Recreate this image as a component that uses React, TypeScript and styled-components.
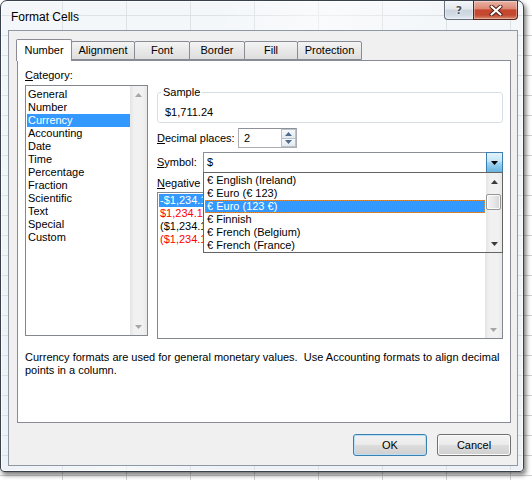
import React from "react";
import styled, { createGlobalStyle } from "styled-components";

const Global = createGlobalStyle`
  html, body { margin: 0; padding: 0; }
  body {
    width: 532px; height: 480px; overflow: hidden;
    font-family: "Liberation Sans", Arial, sans-serif;
    font-size: 11px; color: #000;
  }
`;

const Desktop = styled.div`
  width: 532px;
  height: 480px;
  box-sizing: border-box;
  background-color: #fff;
  background-image:
    linear-gradient(to right, #d0d0d0 1px, transparent 1px),
    linear-gradient(to bottom, #d0d0d0 1px, transparent 1px);
  background-size: 64px 20px;
  background-position: 62px 15px;
`;

const Window = styled.div`
  width: 524px;
  height: 472px;
  box-sizing: border-box;
  border: 1px solid #39424c;
  border-radius: 7px 7px 4px 4px;
  background:
    linear-gradient(115deg, rgba(255,255,255,0) 30%, rgba(255,255,255,0.45) 45%, rgba(255,255,255,0) 60%),
    linear-gradient(rgba(236, 241, 246, 0.55), rgba(226, 233, 240, 0.6));
  box-shadow: 2px 3px 5px rgba(0, 0, 0, 0.55), inset 0 0 0 1px rgba(255,255,255,0.7);
  display: flex;
  flex-direction: column;
  padding: 0 5px 5px 7px;
`;

const TitleBar = styled.div`
  height: 29px;
  display: flex;
  align-items: flex-start;
  justify-content: space-between;
`;

const Title = styled.div`
  font-size: 12px;
  line-height: 15px;
  margin: 9px 0 0 3px;
  color: #000;
  text-shadow: 0 0 6px rgba(255,255,255,0.9);
`;

const CaptionButtons = styled.div`
  display: flex;
`;

const CaptionBtn = styled.div<{ $variant: "help" | "close" }>`
  box-sizing: border-box;
  height: 19px;
  width: ${(p) => (p.$variant === "close" ? 45 : 29)}px;
  display: flex;
  align-items: center;
  justify-content: center;
  border: 1px solid ${(p) => (p.$variant === "close" ? "#5a2218" : "#67727e")};
  border-top: none;
  ${(p) => (p.$variant === "help" ? "border-right: none;" : "")}
  border-radius: ${(p) => (p.$variant === "close" ? "0 0 4px 0" : "0 0 0 4px")};
  background: ${(p) =>
    p.$variant === "close"
      ? "linear-gradient(#eab3a6 0%, #dc8a76 42%, #c8462f 50%, #c24a30 78%, #d98a6c 100%)"
      : "linear-gradient(#f3f6f9 0%, #e2e8ee 45%, #cbd4dd 50%, #d3dce5 80%, #e6edf3 100%)"};
  box-shadow: inset 0 0 0 1px rgba(255,255,255,0.35);
`;

const HelpGlyph = styled.span`
  font-family: "DejaVu Sans", sans-serif;
  font-weight: bold;
  font-size: 11px;
  color: #4a5562;
  text-shadow: 0 0 2px #fff, 0 0 2px #fff;
  line-height: 1;
`;

const Client = styled.div`
  flex: 1;
  box-sizing: border-box;
  background: #f0f0f0;
  border: 1px solid #8f99a4;
  padding: 8px 6px 0 8px;
  display: flex;
  flex-direction: column;
`;

const TabStrip = styled.div`
  display: flex;
  align-items: flex-end;
  height: 22px;
  margin-left: -1px;
  position: relative;
  z-index: 1;
`;

const Tab = styled.div<{ $active?: boolean; $w: number }>`
  box-sizing: border-box;
  width: ${(p) => p.$w}px;
  height: ${(p) => (p.$active ? 22 : 19)}px;
  margin-bottom: ${(p) => (p.$active ? 0 : 1)}px;
  margin-left: -1px;
  &:first-child { margin-left: 0; }
  border: 1px solid #898c95;
  ${(p) => (p.$active ? "border-bottom: none;" : "")}
  border-radius: 2px 2px 0 0;
  background: ${(p) => (p.$active ? "#fff" : "linear-gradient(#f4f4f4, #e9e9e9 45%, #dedede)")};
  position: relative;
  z-index: ${(p) => (p.$active ? 2 : 1)};
  display: flex;
  align-items: ${(p) => (p.$active ? "flex-start" : "center")};
  justify-content: center;
  padding-top: ${(p) => (p.$active ? 4 : 0)}px;
  line-height: 13px;
`;

const Panel = styled.div`
  box-sizing: border-box;
  height: 363px;
  margin-top: -1px;
  border: 1px solid #898c95;
  background: #fff;
  padding: 8px 7px 0 7px;
  display: flex;
  flex-direction: column;
`;

const Columns = styled.div`
  display: grid;
  grid-template-columns: 123px 346px;
  column-gap: 9px;
  align-items: start;
`;

const Column = styled.div`
  display: flex;
  flex-direction: column;
  position: relative;
`;

const Label = styled.div<{ $w?: number }>`
  line-height: 13px;
  white-space: nowrap;
  ${(p) => (p.$w ? `width: ${p.$w}px; flex: none;` : "")}
`;

const ListBox = styled.div<{ $h: number; $mt: number }>`
  box-sizing: border-box;
  height: ${(p) => p.$h}px;
  margin-top: ${(p) => p.$mt}px;
  border: 1px solid #828790;
  background: #fff;
  display: flex;
`;

const ListItems = styled.div<{ $pt: number }>`
  flex: 1;
  min-width: 0;
  padding: ${(p) => p.$pt}px 0 0 1px;
  overflow: hidden;
`;

const ListItem = styled.div<{ $sel?: boolean; $color?: string }>`
  height: 13px;
  line-height: 13px;
  padding-left: 1px;
  white-space: nowrap;
  background: ${(p) => (p.$sel ? "#3399ff" : "transparent")};
  color: ${(p) => (p.$sel ? "#fff" : p.$color || "#000")};
`;

const ScrollTrack = styled.div<{ $w?: number }>`
  width: ${(p) => p.$w || 17}px;
  flex: none;
  display: flex;
  flex-direction: column;
  background: linear-gradient(to right, #e4e4e4, #f1f1f1 25%, #f1f1f1 75%, #e8e8e8);
`;

const ArrowBtn = styled.div`
  height: 17px;
  flex: none;
  display: flex;
  align-items: center;
  justify-content: center;
`;

const Spacer = styled.div`
  flex: 1;
`;

const Thumb = styled.div`
  box-sizing: border-box;
  margin: 4px 1px 0 0;
  height: 16px;
  border: 1px solid #979797;
  border-radius: 2px;
  background: linear-gradient(to right, #f4f4f4, #e8e8e8 50%, #d5d5d5);
  box-shadow: inset 0 0 0 1px rgba(255,255,255,0.8);
`;

const Arrow = ({ up, color }: { up?: boolean; color: string }) => (
  <svg width="7" height="4" viewBox="0 0 7 4">
    <path d={up ? "M0 4 L3.5 0 L7 4 Z" : "M0 0 L7 0 L3.5 4 Z"} fill={color} />
  </svg>
);

const GroupBox = styled.div`
  box-sizing: border-box;
  margin-top: 23px;
  height: 31px;
  border: 1px solid #d5dfe5;
  border-radius: 3px;
  display: flex;
  flex-direction: column;
`;

const Legend = styled.div`
  margin: -7px 0 0 3px;
  padding: 0 2px;
  background: #fff;
  line-height: 13px;
  width: fit-content;
`;

const SampleValue = styled.div`
  margin: 7px 0 0 7px;
  line-height: 13px;
`;

const FieldRow = styled.div<{ $mt: number; $h: number }>`
  display: flex;
  align-items: center;
  height: ${(p) => p.$h}px;
  margin-top: ${(p) => p.$mt}px;
  position: relative;
`;

const SpinBox = styled.div`
  box-sizing: border-box;
  width: 59px;
  height: 20px;
  border: 1px solid #abadb3;
  border-top-color: #8e9198;
  background: #fff;
  display: flex;
`;

const SpinText = styled.div`
  flex: 1;
  padding-left: 5px;
  line-height: 18px;
`;

const SpinButtons = styled.div`
  width: 15px;
  display: flex;
  flex-direction: column;
`;

const SpinPart = styled.div`
  flex: 1;
  box-sizing: border-box;
  border: 1px solid #b6c3cf;
  margin: 0 0 0 0;
  background: linear-gradient(#f7f9fb, #e4e9ee);
  display: flex;
  align-items: center;
  justify-content: center;
  & + & { border-top: none; }
`;

const ComboWrap = styled.div`
  position: relative;
  flex: 1;
  height: 21px;
`;

const Combo = styled.div`
  box-sizing: border-box;
  height: 21px;
  border: 1px solid #8b8f97;
  background: #fff;
  display: flex;
`;

const ComboText = styled.div`
  flex: 1;
  padding-left: 3px;
  line-height: 19px;
`;

const ComboButton = styled.div`
  box-sizing: border-box;
  width: 17px;
  border: 1px solid #3c7fb1;
  background: linear-gradient(#e3f3fc 0%, #c4e5f7 45%, #a3d6f3 50%, #68b3df 100%);
  display: flex;
  align-items: center;
  justify-content: center;
  margin: -1px -1px -1px 0;
`;

const DropList = styled.div`
  position: absolute;
  left: 0;
  right: 0;
  top: 20px;
  height: 81px;
  box-sizing: border-box;
  border: 1px solid #646464;
  background: #fff;
  display: flex;
  z-index: 5;
`;

const DropItems = styled.div`
  flex: 1;
  padding: 1px 1px 0 1px;
`;

const DropItem = styled.div<{ $sel?: boolean }>`
  box-sizing: border-box;
  height: 13px;
  line-height: 11px;
  padding-left: 1px;
  white-space: nowrap;
  border: 1px ${(p) => (p.$sel ? "dotted #e08a3c" : "solid transparent")};
  background: ${(p) => (p.$sel ? "#3399ff" : "transparent")};
  color: ${(p) => (p.$sel ? "#fff" : "#000")};
`;

const Description = styled.div`
  margin-top: 12px;
  line-height: 13px;
`;

const ButtonRow = styled.div`
  display: flex;
  justify-content: flex-end;
  gap: 10px;
  margin-top: 11px;
`;

const Button = styled.div<{ $default?: boolean }>`
  box-sizing: border-box;
  width: 74px;
  height: 22px;
  border: 1px solid ${(p) => (p.$default ? "#3c7fb1" : "#707070")};
  border-radius: 3px;
  background: ${(p) =>
    p.$default
      ? "linear-gradient(#f2f2f2 0%, #ebebeb 48%, #dddddd 50%, #cfcfcf 100%)"
      : "linear-gradient(#f2f2f2 0%, #ebebeb 48%, #dddddd 50%, #cfcfcf 100%)"};
  box-shadow: inset 0 0 0 1px ${(p) => (p.$default ? "#b7e0f7" : "#fcfcfc")};
  display: flex;
  align-items: center;
  justify-content: center;
  line-height: 13px;
`;

const categories = [
  "General", "Number", "Currency", "Accounting", "Date", "Time",
  "Percentage", "Fraction", "Scientific", "Text", "Special", "Custom",
];

const negatives: { text: string; color: string; sel?: boolean }[] = [
  { text: "-$1,234.10", color: "#000", sel: true },
  { text: "$1,234.10", color: "#ff0000" },
  { text: "($1,234.10)", color: "#000" },
  { text: "($1,234.10)", color: "#ff0000" },
];

const symbols = [
  "€ English (Ireland)",
  "€ Euro (€ 123)",
  "€ Euro (123 €)",
  "€ Finnish",
  "€ French (Belgium)",
  "€ French (France)",
];

const tabs: { label: string; w: number; active?: boolean }[] = [
  { label: "Number", w: 56, active: true },
  { label: "Alignment", w: 64 },
  { label: "Font", w: 56 },
  { label: "Border", w: 56 },
  { label: "Fill", w: 54 },
  { label: "Protection", w: 65 },
];

export default function App() {
  return (
    <>
      <Global />
      <Desktop>
        <Window>
          <TitleBar>
            <Title>Format Cells</Title>
            <CaptionButtons>
              <CaptionBtn $variant="help">
                <HelpGlyph>?</HelpGlyph>
              </CaptionBtn>
              <CaptionBtn $variant="close">
                <svg width="14" height="11" viewBox="0 0 14 11">
                  <path d="M2.5 1.5 L11.5 9.5 M11.5 1.5 L2.5 9.5" stroke="#4a1a12" strokeWidth="4" strokeLinecap="round" />
                  <path d="M2.5 1.5 L11.5 9.5 M11.5 1.5 L2.5 9.5" stroke="#fff" strokeWidth="2.2" strokeLinecap="round" />
                </svg>
              </CaptionBtn>
            </CaptionButtons>
          </TitleBar>
          <Client>
            <TabStrip>
              {tabs.map((t) => (
                <Tab key={t.label} $w={t.w} $active={t.active}>
                  {t.label}
                </Tab>
              ))}
            </TabStrip>
            <Panel>
              <Columns>
                <Column>
                  <Label>
                    <u>C</u>ategory:
                  </Label>
                  <ListBox $h={251} $mt={3}>
                    <ListItems $pt={2}>
                      {categories.map((c) => (
                        <ListItem key={c} $sel={c === "Currency"}>
                          {c}
                        </ListItem>
                      ))}
                    </ListItems>
                    <ScrollTrack>
                      <ArrowBtn>
                        <Arrow up color="#a6a6a6" />
                      </ArrowBtn>
                      <Spacer />
                      <ArrowBtn>
                        <Arrow color="#a6a6a6" />
                      </ArrowBtn>
                    </ScrollTrack>
                  </ListBox>
                </Column>
                <Column>
                  <GroupBox>
                    <Legend>Sample</Legend>
                    <SampleValue>$1,711.24</SampleValue>
                  </GroupBox>
                  <FieldRow $mt={5} $h={20}>
                    <Label $w={81}>
                      <u>D</u>ecimal places:
                    </Label>
                    <SpinBox>
                      <SpinText>2</SpinText>
                      <SpinButtons>
                        <SpinPart>
                          <Arrow up color="#4d6b8a" />
                        </SpinPart>
                        <SpinPart>
                          <Arrow color="#4d6b8a" />
                        </SpinPart>
                      </SpinButtons>
                    </SpinBox>
                  </FieldRow>
                  <FieldRow $mt={4} $h={21}>
                    <Label $w={46}>
                      <u>S</u>ymbol:
                    </Label>
                    <ComboWrap>
                      <Combo>
                        <ComboText>$</ComboText>
                        <ComboButton>
                          <Arrow color="#000" />
                        </ComboButton>
                      </Combo>
                      <DropList>
                        <DropItems>
                          {symbols.map((s, i) => (
                            <DropItem key={s} $sel={i === 2}>
                              {s}
                            </DropItem>
                          ))}
                        </DropItems>
                        <ScrollTrack $w={16}>
                          <ArrowBtn>
                            <Arrow up color="#3a3a3a" />
                          </ArrowBtn>
                          <Thumb />
                          <Spacer />
                          <ArrowBtn>
                            <Arrow color="#3a3a3a" />
                          </ArrowBtn>
                        </ScrollTrack>
                      </DropList>
                    </ComboWrap>
                  </FieldRow>
                  <Label style={{ marginTop: 4 }}>
                    <u>N</u>egative numbers:
                  </Label>
                  <ListBox $h={147} $mt={2}>
                    <ListItems $pt={1}>
                      {negatives.map((n, i) => (
                        <ListItem key={i} $sel={n.sel} $color={n.color}>
                          {n.text}
                        </ListItem>
                      ))}
                    </ListItems>
                    <ScrollTrack>
                      <ArrowBtn>
                        <Arrow up color="#a6a6a6" />
                      </ArrowBtn>
                      <Spacer />
                      <ArrowBtn>
                        <Arrow color="#a6a6a6" />
                      </ArrowBtn>
                    </ScrollTrack>
                  </ListBox>
                </Column>
              </Columns>
              <Description>
                Currency formats are used for general monetary values.{"\u00a0 "}Use Accounting formats to align decimal
                <br />
                points in a column.
              </Description>
            </Panel>
            <ButtonRow>
              <Button $default>OK</Button>
              <Button>Cancel</Button>
            </ButtonRow>
          </Client>
        </Window>
      </Desktop>
    </>
  );
}
